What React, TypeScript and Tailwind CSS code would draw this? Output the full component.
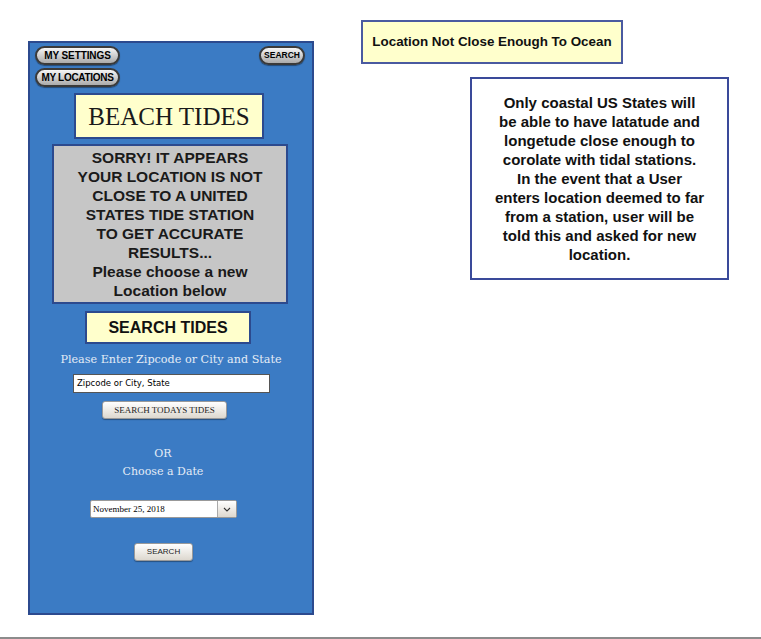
import React from "react";

const pill =
  "flex items-center justify-center h-[19px] rounded-full border-2 border-[#3a3a3a] bg-gradient-to-b from-[#f6f6f6] to-[#ababab] font-bold text-black uppercase leading-none shadow-[0_1px_1px_rgba(0,0,0,0.4)]";

const btn =
  "flex items-center justify-center h-[18px] rounded-[3px] border border-[#9a9a9a] bg-gradient-to-b from-[#ffffff] to-[#ddd8cf] text-[#222] leading-none shadow-[0_1px_1px_rgba(0,0,0,0.35)]";

export default function App() {
  return (
    <div className="w-[761px] h-[639px] bg-white flex flex-col overflow-hidden" style={{ fontFamily: '"Liberation Sans", Arial, sans-serif' }}>
      <div className="flex h-[637px]">
        {/* phone panel */}
        <div className="ml-[28px] mt-[41px] w-[286px] h-[574px] bg-[#3b7bc4] border-2 border-[#2c4a8e] flex flex-col">
          <div className="flex justify-between pl-[5px] pr-[7px] pt-[3px]">
            <div className="flex flex-col gap-[3px]">
              <div className={pill + " w-[85px] text-[10px] tracking-[-0.1px]"}>My Settings</div>
              <div className={pill + " w-[85px] text-[10px] tracking-[-0.3px]"}>My Locations</div>
            </div>
            <div className={pill + " w-[46px] text-[8.5px]"}>Search</div>
          </div>

          <div className="ml-[44px] mt-[6px] w-[190px] h-[46px] bg-[#ffffcc] border-2 border-[#2c4a8e] flex items-center justify-center">
            <span className="text-[25px] text-[#1a1a1a] leading-none" style={{ fontFamily: '"Liberation Serif", "Times New Roman", serif' }}>
              BEACH TIDES
            </span>
          </div>

          <div className="ml-[22px] mt-[5px] w-[236px] h-[160px] bg-[#c6c6c6] border-2 border-[#2c4a8e] flex items-center justify-center">
            <p className="text-center font-bold text-[15.5px] leading-[19px] text-[#1a1a1a]">
              SORRY! IT APPEARS
              <br />
              YOUR LOCATION IS NOT
              <br />
              CLOSE TO A UNITED
              <br />
              STATES TIDE STATION
              <br />
              TO GET ACCURATE
              <br />
              RESULTS...
              <br />
              Please choose a new
              <br />
              Location below
            </p>
          </div>

          <div className="ml-[55px] mt-[7px] w-[166px] h-[33px] bg-[#ffffcc] border-2 border-[#2c4a8e] flex items-center justify-center">
            <span className="text-[16px] font-bold text-[#111] leading-none">SEARCH TIDES</span>
          </div>

          <div
            className="mt-[8px] w-[282px] text-center text-[11.2px] leading-[15px] text-[#e4ecf6]"
            style={{ fontFamily: '"DejaVu Serif", serif' }}
          >
            Please Enter Zipcode or City and State
          </div>

          <div className="ml-[43px] mt-[7px] w-[197px] h-[19px] bg-white border border-[#555] flex items-center pl-[3px]">
            <span className="text-[8.5px] text-black leading-none" style={{ fontFamily: '"DejaVu Sans", sans-serif' }}>
              Zipcode or City, State
            </span>
          </div>

          <div
            className={btn + " ml-[72px] mt-[8px] w-[125px] text-[9px]"}
            style={{ fontFamily: '"Liberation Serif", "Times New Roman", serif' }}
          >
            SEARCH TODAYS TIDES
          </div>

          <div
            className="mt-[26px] w-[266px] text-center text-[11px] leading-[18px] text-[#e4ecf6]"
            style={{ fontFamily: '"DejaVu Serif", serif' }}
          >
            OR
            <br />
            Choose a Date
          </div>

          <div className="ml-[60px] mt-[19px] w-[147px] h-[18px] flex bg-white border border-[#999] rounded-[2px] overflow-hidden">
            <div className="flex-1 flex items-center pl-[2px]">
              <span className="text-[9px] text-black leading-none" style={{ fontFamily: '"Liberation Serif", "Times New Roman", serif' }}>
                November 25, 2018
              </span>
            </div>
            <div className="w-[19px] h-full border-l border-[#aaa] bg-gradient-to-b from-[#ffffff] to-[#ddd8cf] flex items-center justify-center">
              <svg width="8" height="5" viewBox="0 0 8 5">
                <path d="M1 1 L4 4 L7 1" fill="none" stroke="#333" strokeWidth="1.1" />
              </svg>
            </div>
          </div>

          <div className={btn + " ml-[104px] mt-[25px] w-[59px] text-[8px]"}>SEARCH</div>
        </div>

        {/* right side notes */}
        <div className="ml-[47px] mt-[20px] flex flex-col">
          <div className="w-[262px] h-[44px] bg-[#ffffcc] border-2 border-[#4a5aa0] flex items-center justify-center">
            <span className="text-[13.4px] font-bold text-[#111] leading-none">Location Not Close Enough To Ocean</span>
          </div>
          <div className="ml-[109px] mt-[13px] w-[259px] h-[203px] bg-white border-2 border-[#3a4a9a] flex items-center justify-center">
            <p className="text-center font-bold text-[15px] leading-[19px] text-[#111]">
              Only coastal US States will
              <br />
              be able to have latatude and
              <br />
              longetude close enough to
              <br />
              corolate with tidal stations.
              <br />
              In the event that a User
              <br />
              enters location deemed to far
              <br />
              from a station, user will be
              <br />
              told this and asked for new
              <br />
              location.
            </p>
          </div>
        </div>
      </div>
      <div className="h-[2px] bg-[#8c8c8c]" />
    </div>
  );
}
